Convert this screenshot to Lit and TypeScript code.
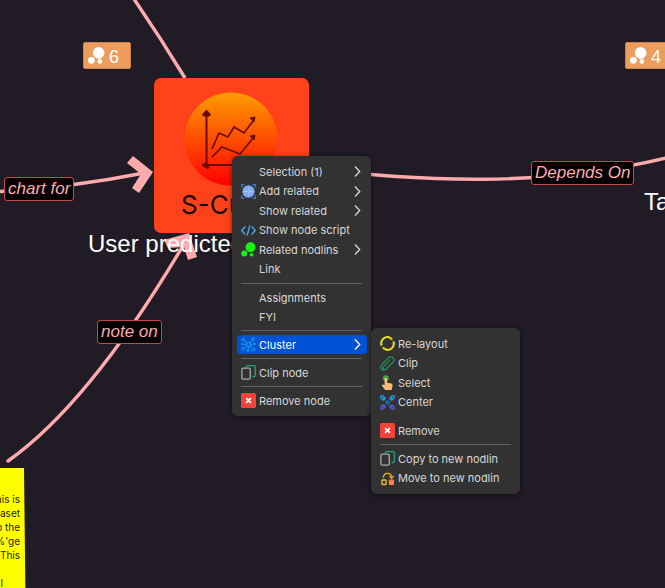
import { LitElement, html, css, svg, nothing } from "lit";
import { customElement, property } from "lit/decorators.js";

const bubbles = svg`<circle cx="10" cy="5.500" r="5.500"/><circle cx="3.200" cy="12.500" r="3.200"/><circle cx="11.200" cy="13.600" r="2.200"/>`;

const icons: Record<string, unknown> = {
  add: svg`<circle cx="7.500" cy="7.500" r="6.200" fill="#79a5f5"/><g fill="none" stroke="#3f78dc" stroke-width="1.300"><path d="M.7 3.500V.7h2.800M11.500.7h2.800v2.800M14.300 11.500v2.800h-2.800M3.500 14.300H.7v-2.800"/></g><path d="M7.500 3v9M3 7.500h9M4.800 4.500v6M10.200 4.500v6" stroke="#c4dcff" stroke-width=".8" stroke-dasharray="1.500 1"/>`,
  code: svg`<path d="M4.300 3.500.8 7.500l3.500 4M10.700 3.500l3.500 4-3.500 4M8.800 2.500l-2.600 10" fill="none" stroke="#4aa5e8" stroke-width="1.400"/>`,
  nodlins: svg`<g fill="#16f216"><circle cx="9.500" cy="5.300" r="5"/><circle cx="3.300" cy="11.500" r="3"/><circle cx="10.500" cy="12.800" r="1.800"/></g>`,
  cluster: svg`<g fill="none" stroke="#12a5ea" stroke-width="1"><circle cx="7.500" cy="7.500" r="2.200"/><circle cx="2.500" cy="2.700" r="1.300"/><circle cx="12.200" cy="2" r="1.300"/><circle cx="2.200" cy="11.800" r="1.300"/><circle cx="12.500" cy="12.500" r="1.500"/><circle cx="7" cy="13.500" r="1"/><circle cx="13.500" cy="7" r=".8"/><circle cx="1.300" cy="7" r=".7"/><path d="m3.500 3.600 2.400 2.300M11.300 3 9 5.900M3.300 11l2.500-2M11.500 11.500 9 9.100M7.200 12.500 7.400 9.700M9.700 7.400l3-.3M2 7.100l3.300.3"/></g>`,
  copy: svg`<path d="M5.500 2.300V1.900Q5.500.7 6.700.7h6.400q1.200 0 1.200 1.200v8.400q0 1.200-1.200 1.200h-1.600" fill="none" stroke="#1fa873" stroke-width="1.300"/><rect x=".9" y="3.200" width="8.400" height="11" rx="1.400" fill="none" stroke="#aaa" stroke-width="1.300"/>`,
  remove: svg`<rect width="15" height="15" rx="1.500" fill="#f44338"/><path d="m5.100 5.100 4.800 4.800M9.900 5.100 5.100 9.900" stroke="#fff" stroke-width="1.700"/>`,
  layout: svg`<g fill="none" stroke="#efe11c" stroke-width="2"><path d="M1.700 9.600A6.100 6.100 0 0 1 10.800 2.300"/><path d="M13.300 5.400A6.100 6.100 0 0 1 4.200 12.700"/></g><path d="M10 3.800 12.800 3.900 11.800 1.200zM5 11.200l-2.800-.1 1 2.700z" fill="#efe11c"/>`,
  clip: svg`<path d="m12.800 6.200-6.600 6.900q-2.400 2-4.600.2-2-2.200 0-4.500l6.700-7q2-1.700 4.400-.3 2.400 2.300.4 4.600l-6.800 6.900q-1.500 1-2.800 0-1-1.300.2-2.600l6.300-6.500" fill="none" stroke="#239454" stroke-width="1.200" stroke-linecap="round"/>`,
  select: svg`<circle cx="5.800" cy="3.300" r="3" fill="#46a04c"/><path d="M4.600 3.500q1.300-1.400 2.500 0v4.200l4.400.7q1.200.4 1.100 1.700l-.9 4.900H5.100L2 10.700q-.2-1.400 1-1.300l1.600.8z" fill="#f7bd78"/>`,
  center: svg`<g fill="none" stroke-width="1.200"><circle cx="7.500" cy="7.500" r="1.500" stroke="#2485d8"/><path d="M.8.8h2.400l2 2.500-1.900 1.900L.8 3.200zM5 5 2.500 2.500" stroke="#1e9de5"/><path d="M14.200.8h-2.400l-2 2.500 1.900 1.900 2.500-2zM10 5l2.500-2.500" stroke="#1e9de5"/><path d="M.8 14.200h2.400l2-2.500-1.900-1.900-2.500 2zM5 10l-2.500 2.500" stroke="#4b5cdb"/><path d="M14.200 14.200h-2.400l-2-2.500 1.900-1.900 2.500 2zM10 10l2.500 2.500" stroke="#4b5cdb"/></g>`,
  move: svg`<rect x="1.900" y="9" width="4.200" height="4.500" rx=".8" fill="none" stroke="#efc524" stroke-width="1.300"/><rect x="8.800" y="8.400" width="5.200" height="5.600" rx="1" fill="#ff8142"/><path d="M3.300 6.800Q3.500 2.300 7.600 2.300q3.700 0 4 3.700" fill="none" stroke="#f0a92b" stroke-width="1.300"/><path d="m9.500 5 2.100 2.300L13.600 5" fill="none" stroke="#f0a92b" stroke-width="1.200"/>`,
};

type Entry = { label: string; icon?: string; more?: boolean; active?: boolean };
type Group = { entries: Entry[]; kind?: "plain" | "pair" };

const nodeMenu: Group[] = [
  {
    entries: [
      { label: "Selection (1)", more: true },
      { label: "Add related", icon: "add", more: true },
      { label: "Show related", more: true },
      { label: "Show node script", icon: "code" },
      { label: "Related nodlins", icon: "nodlins", more: true },
      { label: "Link" },
    ],
  },
  { kind: "pair", entries: [{ label: "Assignments" }, { label: "FYI" }] },
  { entries: [{ label: "Cluster", icon: "cluster", more: true, active: true }] },
  { entries: [{ label: "Clip node", icon: "copy" }] },
  { entries: [{ label: "Remove node", icon: "remove" }] },
];

const clusterMenu: Group[] = [
  {
    entries: [
      { label: "Re-layout", icon: "layout" },
      { label: "Clip", icon: "clip" },
      { label: "Select", icon: "select" },
      { label: "Center", icon: "center" },
    ],
  },
  { kind: "plain", entries: [{ label: "Remove", icon: "remove" }] },
  {
    entries: [
      { label: "Copy to new nodlin", icon: "copy" },
      { label: "Move to new nodlin", icon: "move" },
    ],
  },
];

@customElement("context-menu")
export class ContextMenu extends LitElement {
  @property({ attribute: false }) groups: Group[] = [];

  static styles = css`
    :host {
      display: block;
      box-sizing: border-box;
      padding: 6px 4px 6px 5px;
      border-radius: 6px;
      background: #323232;
      box-shadow: 0 1px 5px #0008;
      font: 11px/16px Inter, "Liberation Sans", sans-serif;
    }
    .group + .group::before {
      content: "";
      display: block;
      height: 1px;
      margin: 4px 5px 4px 4px;
      background: #626262;
    }
    .group.plain::before {
      visibility: hidden;
    }
    .item {
      display: flex;
      align-items: center;
      gap: 3px;
      width: 100%;
      height: 19px;
      padding: 0 6px 0 4px;
      border: 0;
      border-radius: 3px;
      background: none;
      color: #d8d8d8;
      font: inherit;
      text-align: left;
      white-space: nowrap;
    }
    .group:not(.pair) .item:nth-child(even) {
      height: 20px;
    }
    .item.active {
      background: #0052d4;
      color: #fff;
    }
    .icon {
      flex: none;
      width: 15px;
      height: 15px;
    }
    .label {
      flex: 1;
    }
    .chevron {
      flex: none;
      width: 7px;
      height: 11px;
      fill: none;
      stroke: currentColor;
      stroke-width: 1.3;
    }
  `;

  render() {
    return this.groups.map(
      (group) => html`<div class="group ${group.kind ?? ""}" role="group">
        ${group.entries.map(
          (e) => html`<button class="item ${e.active ? "active" : ""}" role="menuitem">
            <svg class="icon" viewBox="0 0 15 15" aria-hidden="true">${e.icon ? icons[e.icon] : nothing}</svg>
            <span class="label">${e.label}</span>
            ${e.more ? html`<svg class="chevron" viewBox="0 0 7 11" aria-hidden="true"><path d="M1 .5 5.700 5.500 1 10.500" /></svg>` : nothing}
          </button>`
        )}
      </div>`
    );
  }
}

@customElement("app-root")
export class AppRoot extends LitElement {
  static styles = css`
    :host {
      display: block;
      position: relative;
      min-height: 100vh;
      overflow: hidden;
      background: #211b25;
      font-family: "Liberation Sans", Arial, sans-serif;
    }
    .edges {
      position: absolute;
      inset: 0;
      width: 100%;
      height: 100%;
      fill: none;
      stroke: #ffabae;
      stroke-width: 3.4;
    }
    .head {
      fill: #ffabae;
      stroke: none;
    }
    .node {
      position: absolute;
      left: 154px;
      top: 78px;
      box-sizing: border-box;
      width: 155px;
      height: 155px;
      padding: 14px 27px 0;
      border-radius: 7px;
      background: #ff4219;
    }
    .art {
      display: block;
      width: 94px;
      height: 94px;
      margin-left: 3px;
    }
    .name {
      color: #160500;
      font: 26px/38px Inter, sans-serif;
      white-space: nowrap;
    }
    .title {
      position: absolute;
      color: #fff;
      font-size: 24px;
      line-height: 28px;
      white-space: nowrap;
    }
    .user {
      left: 88px;
      top: 230px;
    }
    .target {
      left: 644px;
      top: 188px;
    }
    .tag {
      position: absolute;
      padding: 0 3px;
      border: 1px solid #c8474d;
      border-radius: 3px;
      background: #000;
      color: #ffabae;
      font-size: 17px;
      font-style: italic;
      line-height: 22px;
      white-space: nowrap;
    }
    .chart {
      left: 4px;
      top: 177px;
    }
    .note-on {
      left: 97px;
      top: 320px;
    }
    .depends {
      left: 531px;
      top: 161px;
    }
    .chip {
      position: absolute;
      top: 42px;
      display: flex;
      align-items: center;
      gap: 4px;
      box-sizing: border-box;
      width: 48px;
      height: 27px;
      padding: 3px 4px 0;
      border: 1px solid #c98450;
      border-radius: 2px;
      background: #ec9c5c;
      color: #fff;
      font-size: 18px;
      line-height: 24px;
    }
    .bubbles {
      width: 17px;
      height: 17px;
      margin-bottom: 4px;
      fill: #fff;
    }
    .six {
      left: 83px;
    }
    .four {
      left: 625px;
    }
    .sheet {
      position: absolute;
      left: -100px;
      top: 468px;
      box-sizing: border-box;
      width: 126px;
      height: 180px;
      padding: 24px 6px 0 0;
      background: #ffff00;
      clip-path: polygon(0 0, 124px 0, 126px 100%, 0 100%);
      color: #222200;
      font: 10px/14px Inter, sans-serif;
      text-align: right;
    }
    .sheet p {
      margin: 0;
    }
    .sheet .last {
      padding: 14px 17px 0 0;
    }
    .menu {
      position: absolute;
      left: 232px;
      top: 156px;
      width: 139px;
    }
    .submenu {
      position: absolute;
      left: 371px;
      top: 328px;
      width: 149px;
    }
  `;

  private chip(count: number, place: string) {
    return html`<div class="chip ${place}">
      <svg class="bubbles" viewBox="0 0 16 16" aria-hidden="true">${bubbles}</svg>
      <span>${count}</span>
    </div>`;
  }

  render() {
    return html`
      <svg class="edges" aria-hidden="true">
        <path d="M134-1Q160 37 185 78" />
        <path d="M0 191.500Q74 187 144 173" />
        <path d="M8 461Q90 403 184 244" stroke-linecap="round" />
        <path d="M300 167C420 182 545 188 670 157" />
        <path class="head" d="M133 156 153 172 139 193 132 188 141 174 127 163z" />
        <path class="head" d="M189 233 197 257 188 260 184 247 168 248 164 240z" />
      </svg>
      <div class="node">
        <svg class="art" viewBox="0 0 94 94" aria-hidden="true">
          <defs>
            <linearGradient id="sun" x1="0" y1="0" x2="0" y2="1">
              <stop offset="0" stop-color="#ff9c00" />
              <stop offset="1" stop-color="#ff0000" />
            </linearGradient>
          </defs>
          <circle cx="47" cy="47" r="46.500" fill="url(#sun)" />
          <g fill="none" stroke="#6d0b00" stroke-width="2">
            <path d="M22.500 21v52H76" />
            <path d="m28 57 7-16 9 4 6-10 10 6 10-13M28 65l10-10 18 7 14-17" stroke-width="1.700" />
          </g>
          <path d="m22.500 18 4 4.500-1 1.500h-6l-1-1.500zM18 73l5-2.500 2 5.500-2 .5zM71 25l-5 1 4 4zM71 43l-5 1 4 4z" fill="#6d0b00" stroke="#6d0b00" />
        </svg>
        <div class="name">S-Curve</div>
      </div>
      <div class="title user">User predicted</div>
      <div class="title target">Target</div>
      <div class="tag chart">chart for</div>
      <div class="tag note-on">note on</div>
      <div class="tag depends">Depends On</div>
      ${this.chip(6, "six")} ${this.chip(4, "four")}
      <div class="sheet">
        <p>This is</p>
        <p>dataset</p>
        <p>to the</p>
        <p>%'ge</p>
        <p>This</p>
        <p class="last">l</p>
      </div>
      <context-menu class="menu" role="menu" .groups=${nodeMenu}></context-menu>
      <context-menu class="submenu" role="menu" .groups=${clusterMenu}></context-menu>
    `;
  }
}
